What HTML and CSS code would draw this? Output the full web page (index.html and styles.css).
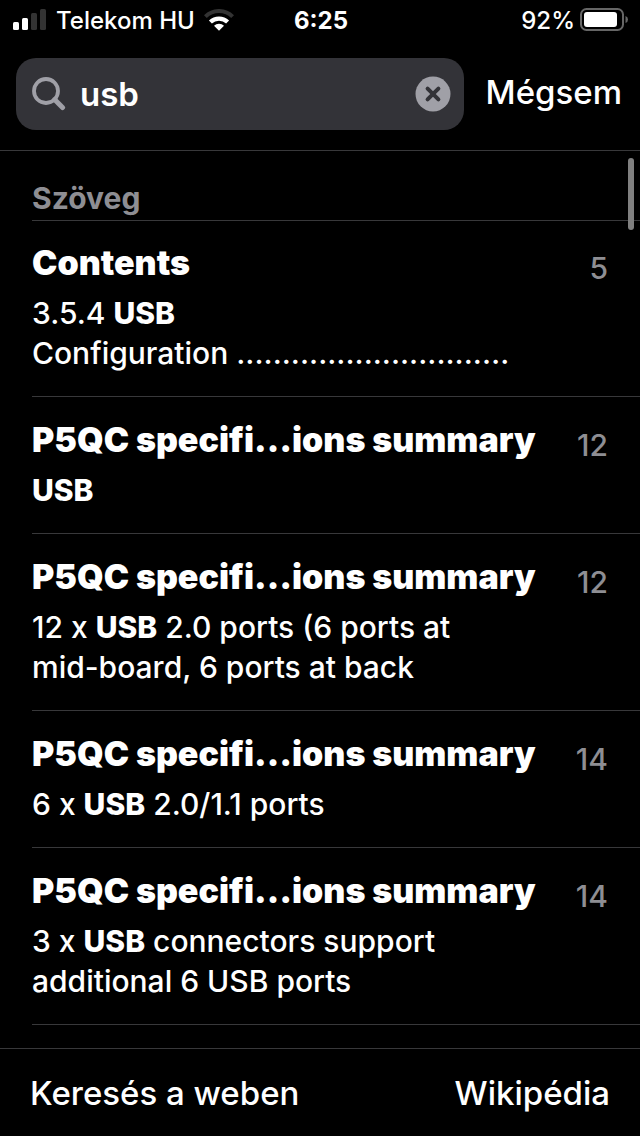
FILE: index.html
```html
<!DOCTYPE html>
<html lang="hu">
<head>
<meta charset="utf-8">
<meta name="viewport" content="width=device-width, initial-scale=1">
<title>Keresés</title>
<link rel="stylesheet" href="styles.css">
</head>
<body>
<div class="app">
  <div class="status">
    <div class="status-left">
      <svg class="signal" width="34" height="22" viewBox="0 0 34 22" aria-hidden="true">
        <rect x="0" y="13" width="6" height="8" rx="1.5" fill="#fff"/>
        <rect x="9" y="9" width="6" height="12" rx="1.5" fill="#fff"/>
        <rect x="18" y="4" width="6" height="17" rx="1.5" fill="#333"/>
        <rect x="27" y="0" width="6" height="21" rx="1.5" fill="#333"/>
      </svg>
      <span>Telekom HU</span>
      <svg class="wifi" width="30" height="22" viewBox="0 0 30 22" aria-hidden="true">
        <path d="M1.4 7.6A19.3 19.3 0 0 1 28.6 7.6" fill="none" stroke="#333" stroke-width="4"/>
        <path d="M6.4 13.1A12.2 12.2 0 0 1 23.6 13.1" fill="none" stroke="#fff" stroke-width="4.2"/>
        <path d="M15 21.8L10 16.8A7 7 0 0 1 20 16.8Z" fill="#fff"/>
      </svg>
    </div>
    <span class="clock">6:25</span>
    <div class="status-right">
      <span>92%</span>
      <svg class="battery" width="49" height="24" viewBox="0 0 49 24" aria-hidden="true">
        <rect x="1" y="1" width="42" height="21" rx="5.5" fill="none" stroke="#666" stroke-width="2"/>
        <rect x="4" y="4" width="33" height="15" rx="3" fill="#fff"/>
        <path d="M45.5 8Q48 8.8 48 11.5Q48 14.2 45.5 15Z" fill="#666"/>
      </svg>
    </div>
  </div>

  <form class="search">
    <div class="field">
      <svg class="glass" width="34" height="34" viewBox="0 0 34 34" fill="none" stroke="#a0a0a7" aria-hidden="true">
        <circle cx="14" cy="14" r="12" stroke-width="3.8"/>
        <path d="M22.6 22.6L30.5 30.5" stroke-width="5" stroke-linecap="round"/>
      </svg>
      <input class="query" type="text" value="usb" aria-label="Keresés">
      <button class="clear" type="button" aria-label="Törlés">
        <svg width="36" height="36" viewBox="0 0 36 36" aria-hidden="true">
          <circle cx="18" cy="18" r="17.5" fill="#a0a0a7"/>
          <path d="M12.6 12.6L23.4 23.4M23.4 12.6L12.6 23.4" stroke="#333338" stroke-width="4" stroke-linecap="round"/>
        </svg>
      </button>
    </div>
    <button class="cancel" type="button">Mégsem</button>
  </form>

  <main class="results">
    <h1 class="section">Szöveg</h1>
    <ul class="list">
      <li class="row">
        <div class="text"><h2 class="title">Contents</h2><p class="snippet">3.5.4 <b>USB</b><br>Configuration ...........................…</p></div>
        <span class="page">5</span>
      </li>
      <li class="row">
        <div class="text"><h2 class="title">P5QC specifi…ions summary</h2><p class="snippet"><b>USB</b></p></div>
        <span class="page">12</span>
      </li>
      <li class="row">
        <div class="text"><h2 class="title">P5QC specifi…ions summary</h2><p class="snippet">12 x <b>USB</b> 2.0 ports (6 ports at<br>mid-board, 6 ports at back</p></div>
        <span class="page">12</span>
      </li>
      <li class="row">
        <div class="text"><h2 class="title">P5QC specifi…ions summary</h2><p class="snippet">6 x <b>USB</b> 2.0/1.1 ports</p></div>
        <span class="page">14</span>
      </li>
      <li class="row">
        <div class="text"><h2 class="title">P5QC specifi…ions summary</h2><p class="snippet">3 x <b>USB</b> connectors support<br>additional 6 USB ports</p></div>
        <span class="page">14</span>
      </li>
    </ul>
    <div class="scrollbar"></div>
  </main>

  <footer class="toolbar">
    <button class="action" type="button">Keresés a weben</button>
    <button class="action" type="button">Wikipédia</button>
  </footer>
</div>
</body>
</html>
```
FILE: styles.css
```css
* {
  box-sizing: border-box;
}

body {
  margin: 0;
  background: #000;
  color: #fff;
  font-family: Inter, "Liberation Sans", sans-serif;
  font-weight: 500;
}

button,
input {
  padding: 0;
  border: 0;
  background: none;
  color: inherit;
  font: inherit;
}

svg {
  display: block;
}

.app {
  display: flex;
  flex-direction: column;
  min-height: 100vh;
}

.status {
  display: grid;
  grid-template-columns: 1fr auto 1fr;
  align-items: center;
  height: 40px;
  padding: 0 11px 0 13px;
  font-size: 24px;
}

.status-left,
.status-right {
  display: flex;
  align-items: center;
  gap: 9px;
}

.status-right {
  justify-content: flex-end;
  gap: 5px;
}

.clock {
  font-weight: 700;
}

.search {
  display: flex;
  align-items: center;
  gap: 22px;
  padding: 18px 18px 20px 16px;
  border-bottom: 1px solid #38383a;
  font-size: 33px;
}

.field {
  display: flex;
  flex: 1;
  align-items: center;
  gap: 14px;
  min-width: 0;
  height: 72px;
  padding: 0 13px 0 16px;
  border-radius: 20px;
  background: #333338;
}

.glass {
  flex: none;
}

.query {
  flex: 1;
  min-width: 0;
  height: 48px;
  outline: 0;
  font-weight: 600;
}

.cancel {
  padding-bottom: 4px;
}

.results {
  position: relative;
  flex: 1;
}

.section {
  margin: 0 0 0 32px;
  padding: 27px 0 2px;
  border-bottom: 1px solid #38383a;
  color: #8e8e93;
  font-size: 30px;
  font-weight: 700;
  line-height: 40px;
}

.list {
  margin: 0 0 0 32px;
  padding: 0;
  list-style: none;
}

.row {
  display: flex;
  justify-content: space-between;
  padding: 21px 32px 23px 0;
  border-bottom: 1px solid #38383a;
}

.row:first-child {
  padding-top: 20px;
}

.title {
  margin: 0 0 8px;
  font-size: 34px;
  font-weight: 900;
  line-height: 44px;
}

.snippet {
  margin: 0;
  font-size: 30px;
  line-height: 40px;
}

.snippet b {
  font-weight: 800;
}

.page {
  padding-top: 7px;
  color: #8e8e93;
  font-size: 30px;
  line-height: 40px;
}

.scrollbar {
  position: absolute;
  top: 7px;
  right: 6px;
  width: 6px;
  height: 72px;
  border-radius: 3px;
  background: #808080;
}

.toolbar {
  display: flex;
  align-items: center;
  justify-content: space-between;
  height: 88px;
  padding: 0 30px;
  border-top: 1px solid #38383a;
  font-size: 33px;
}
```
